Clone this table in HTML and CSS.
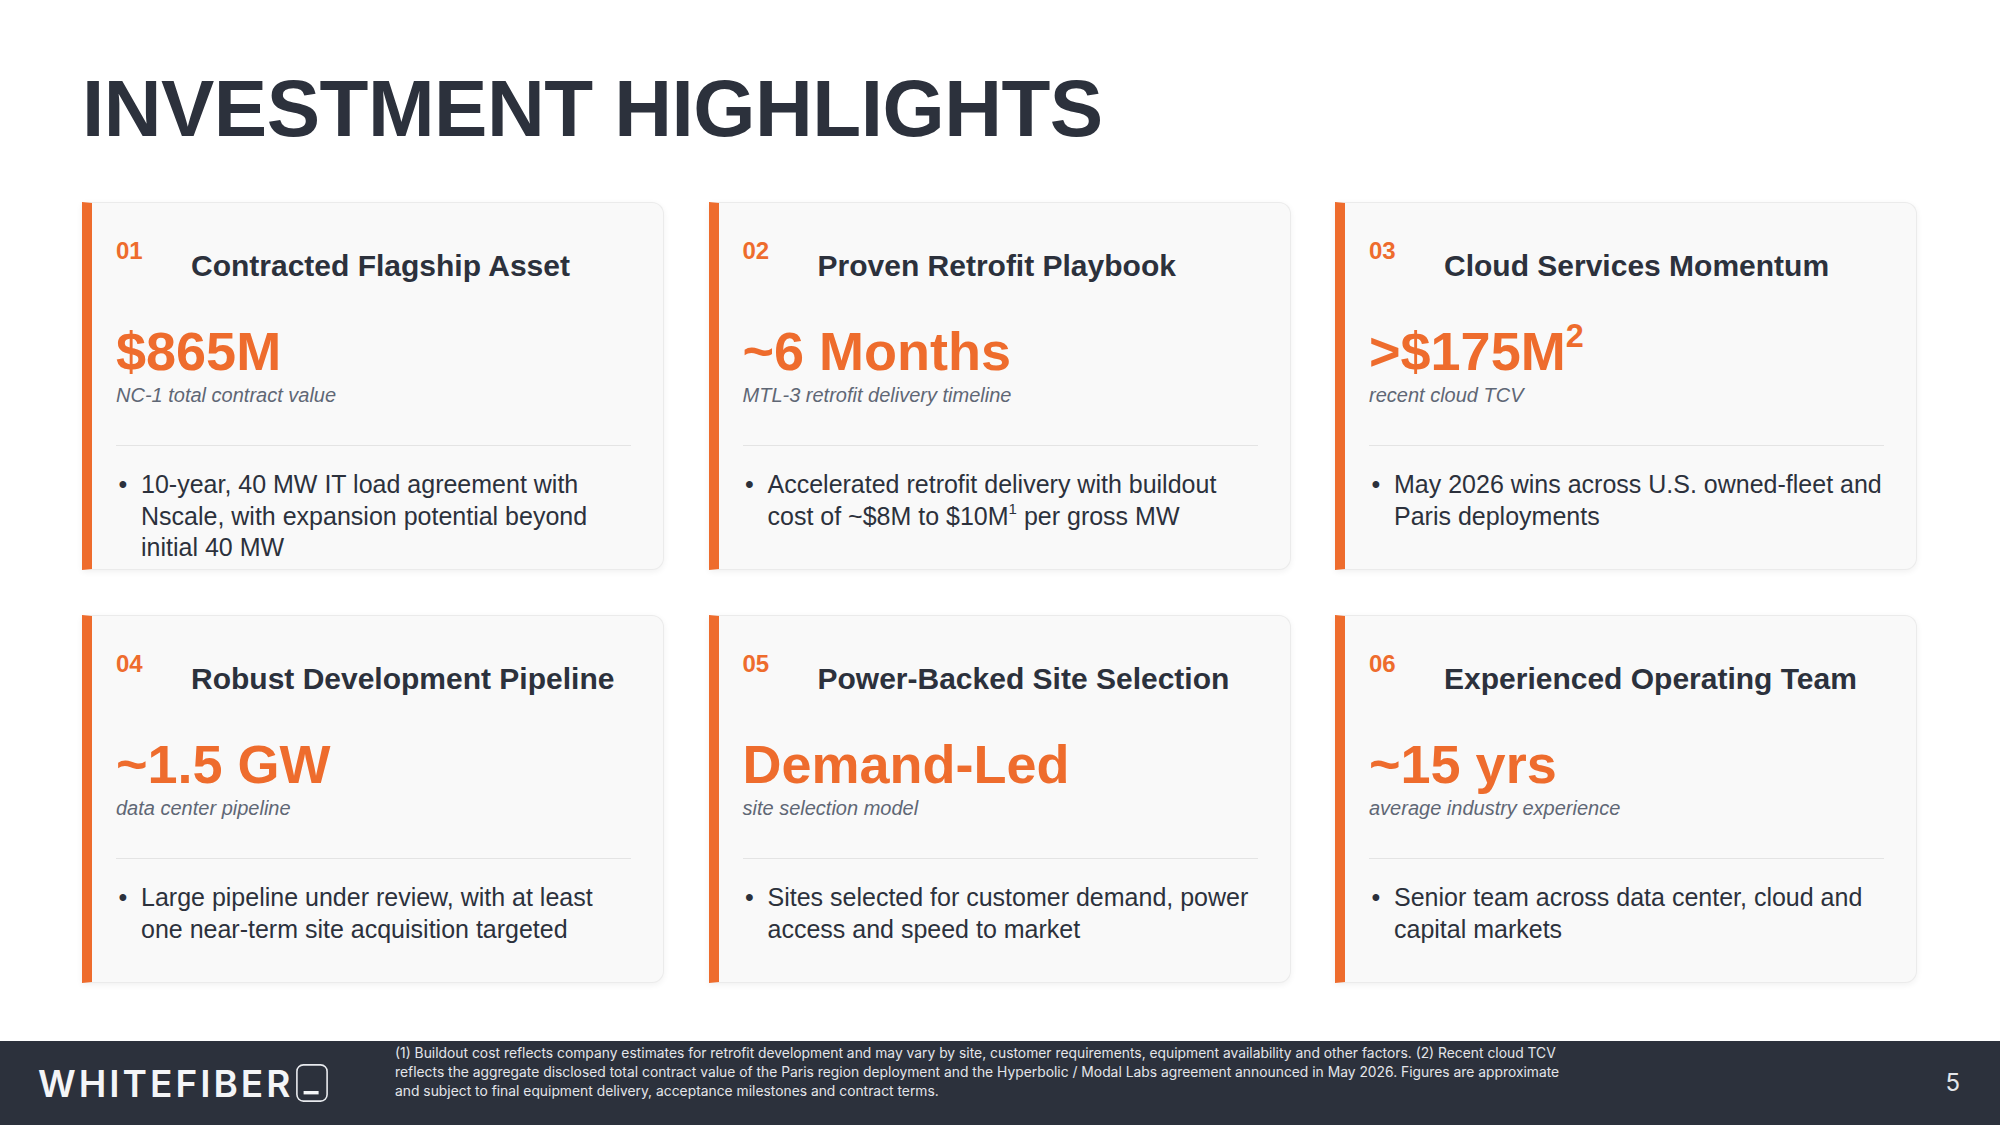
FILE: index.html
```html
<!DOCTYPE html>
<html lang="en">
<head>
<meta charset="utf-8">
<title>Investment Highlights</title>
<link rel="stylesheet" href="styles.css">
</head>
<body>
<div class="slide">
  <h1 class="title">INVESTMENT HIGHLIGHTS</h1>

  <div class="grid">
    <div class="card">
      <div class="card-head"><span class="num">01</span><h2 class="head">Contracted Flagship Asset</h2></div>
      <div class="value">$865M</div>
      <div class="label">NC-1 total contract value</div>
      <div class="rule"></div>
      <ul class="bullets"><li><span>10-year, 40 MW IT load agreement with Nscale, with expansion potential beyond initial 40 MW</span></li></ul>
    </div>
    <div class="card">
      <div class="card-head"><span class="num">02</span><h2 class="head">Proven Retrofit Playbook</h2></div>
      <div class="value">~6 Months</div>
      <div class="label">MTL-3 retrofit delivery timeline</div>
      <div class="rule"></div>
      <ul class="bullets"><li><span>Accelerated retrofit delivery with buildout cost of ~$8M to $10M<sup>1</sup> per gross MW</span></li></ul>
    </div>
    <div class="card">
      <div class="card-head"><span class="num">03</span><h2 class="head">Cloud Services Momentum</h2></div>
      <div class="value">&gt;$175M<sup>2</sup></div>
      <div class="label">recent cloud TCV</div>
      <div class="rule"></div>
      <ul class="bullets"><li><span>May 2026 wins across U.S. owned-fleet and Paris deployments</span></li></ul>
    </div>
    <div class="card">
      <div class="card-head"><span class="num">04</span><h2 class="head">Robust Development Pipeline</h2></div>
      <div class="value">~1.5 GW</div>
      <div class="label">data center pipeline</div>
      <div class="rule"></div>
      <ul class="bullets"><li><span>Large pipeline under review, with at least one near-term site acquisition targeted</span></li></ul>
    </div>
    <div class="card">
      <div class="card-head"><span class="num">05</span><h2 class="head">Power-Backed Site Selection</h2></div>
      <div class="value">Demand-Led</div>
      <div class="label">site selection model</div>
      <div class="rule"></div>
      <ul class="bullets"><li><span>Sites selected for customer demand, power access and speed to market</span></li></ul>
    </div>
    <div class="card">
      <div class="card-head"><span class="num">06</span><h2 class="head">Experienced Operating Team</h2></div>
      <div class="value">~15 yrs</div>
      <div class="label">average industry experience</div>
      <div class="rule"></div>
      <ul class="bullets"><li><span>Senior team across data center, cloud and capital markets</span></li></ul>
    </div>
  </div>

  <footer class="footer">
    <div class="logo">
      <span class="logo-text">WHITEFIBER</span>
      <svg class="logo-box" width="32" height="38" viewBox="0 0 32 38" aria-hidden="true">
        <rect x="0.9" y="0.9" width="30.2" height="36.2" rx="6.5" fill="none" stroke="#e8eaee" stroke-width="1.6"/>
        <rect x="7.6" y="27" width="15" height="3.4" fill="#f4f5f7"/>
      </svg>
    </div>
    <p class="notes">(1) Buildout cost reflects company estimates for retrofit development and may vary by site, customer requirements, equipment availability and other factors. (2) Recent cloud TCV<br>reflects the aggregate disclosed total contract value of the Paris region deployment and the Hyperbolic / Modal Labs agreement announced in May 2026. Figures are approximate<br>and subject to final equipment delivery, acceptance milestones and contract terms.</p>
    <div class="page">5</div>
  </footer>
</div>
</body>
</html>
```

FILE: styles.css
```css
* { box-sizing: border-box; }

html, body {
  margin: 0;
  padding: 0;
  background: #ffffff;
}

body {
  font-family: "Liberation Sans", Arial, sans-serif;
  color: #2c313c;
}

.slide {
  width: 2000px;
  height: 1125px;
  display: flex;
  flex-direction: column;
  overflow: hidden;
}

.title {
  margin: 65px 0 0 82px;
  font-size: 80px;
  line-height: 1.1;
  font-weight: 700;
  letter-spacing: -0.5px;
  color: #2c313c;
}

.grid {
  margin: 49px 83px 0 82px;
  display: grid;
  grid-template-columns: repeat(3, 1fr);
  grid-template-rows: 368px 368px;
  column-gap: 44.5px;
  row-gap: 45px;
}

.card {
  background: #f9f9f9;
  border: 1px solid #ebebeb;
  border-left: 10px solid #ee6c2d;
  border-radius: 0 12px 12px 0;
  box-shadow: 0 2px 6px rgba(0, 0, 0, 0.06);
  padding: 34px 32px 0 24px;
  overflow: hidden;
}

.card-head {
  display: flex;
  align-items: flex-start;
}

.num {
  flex: 0 0 75px;
  font-size: 24px;
  line-height: 1.2;
  font-weight: 700;
  color: #ee6c2d;
}

.head {
  margin: 11px 0 0 0;
  font-size: 30px;
  line-height: 1.2;
  font-weight: 700;
  color: #2c313c;
}

.value {
  margin-top: 38px;
  font-size: 54px;
  line-height: 1.1;
  font-weight: 700;
  color: #ee6c2d;
}

.value sup {
  font-size: 0.6em;
  line-height: 0;
  vertical-align: 0.7em;
}

.label {
  margin-top: 1px;
  font-size: 20px;
  line-height: 1.3;
  font-style: italic;
  color: #5f6775;
}

.rule {
  margin-top: 37px;
  height: 1px;
  background: #e4e4e4;
}

.bullets {
  list-style: none;
  margin: 23px -5px 0 0;
  padding: 0;
}

.bullets li {
  display: flex;
  font-size: 25px;
  line-height: 1.25;
  color: #2c313c;
}

.bullets li::before {
  content: "\2022";
  flex: 0 0 22.5px;
  padding-left: 2.5px;
}

.bullets li span {
  flex: 1 1 auto;
  min-width: 0;
}

.bullets sup {
  font-size: 0.6em;
  line-height: 0;
  vertical-align: 0.75em;
}

.footer {
  margin-top: auto;
  height: 84px;
  background: #2c313c;
  display: grid;
  grid-template-columns: 357px 1fr auto;
  align-items: center;
  padding: 0 40px 0 38px;
}

.logo {
  display: flex;
  align-items: center;
}

.logo-text {
  font-family: Inter, "Noto Sans", sans-serif;
  font-size: 37px;
  font-weight: 600;
  letter-spacing: 3px;
  line-height: 1;
  color: #f4f5f7;
}

.logo-box {
  display: block;
  margin-left: 3px;
}

.notes {
  align-self: start;
  margin: 0;
  padding-top: 3px;
  font-family: Inter, "Noto Sans", sans-serif;
  font-size: 13.85px;
  line-height: 19px;
  color: #e3e5ea;
  white-space: nowrap;
}

.page {
  font-family: Inter, "Noto Sans", sans-serif;
  font-size: 24px;
  line-height: 1;
  color: #e3e5ea;
}
```
